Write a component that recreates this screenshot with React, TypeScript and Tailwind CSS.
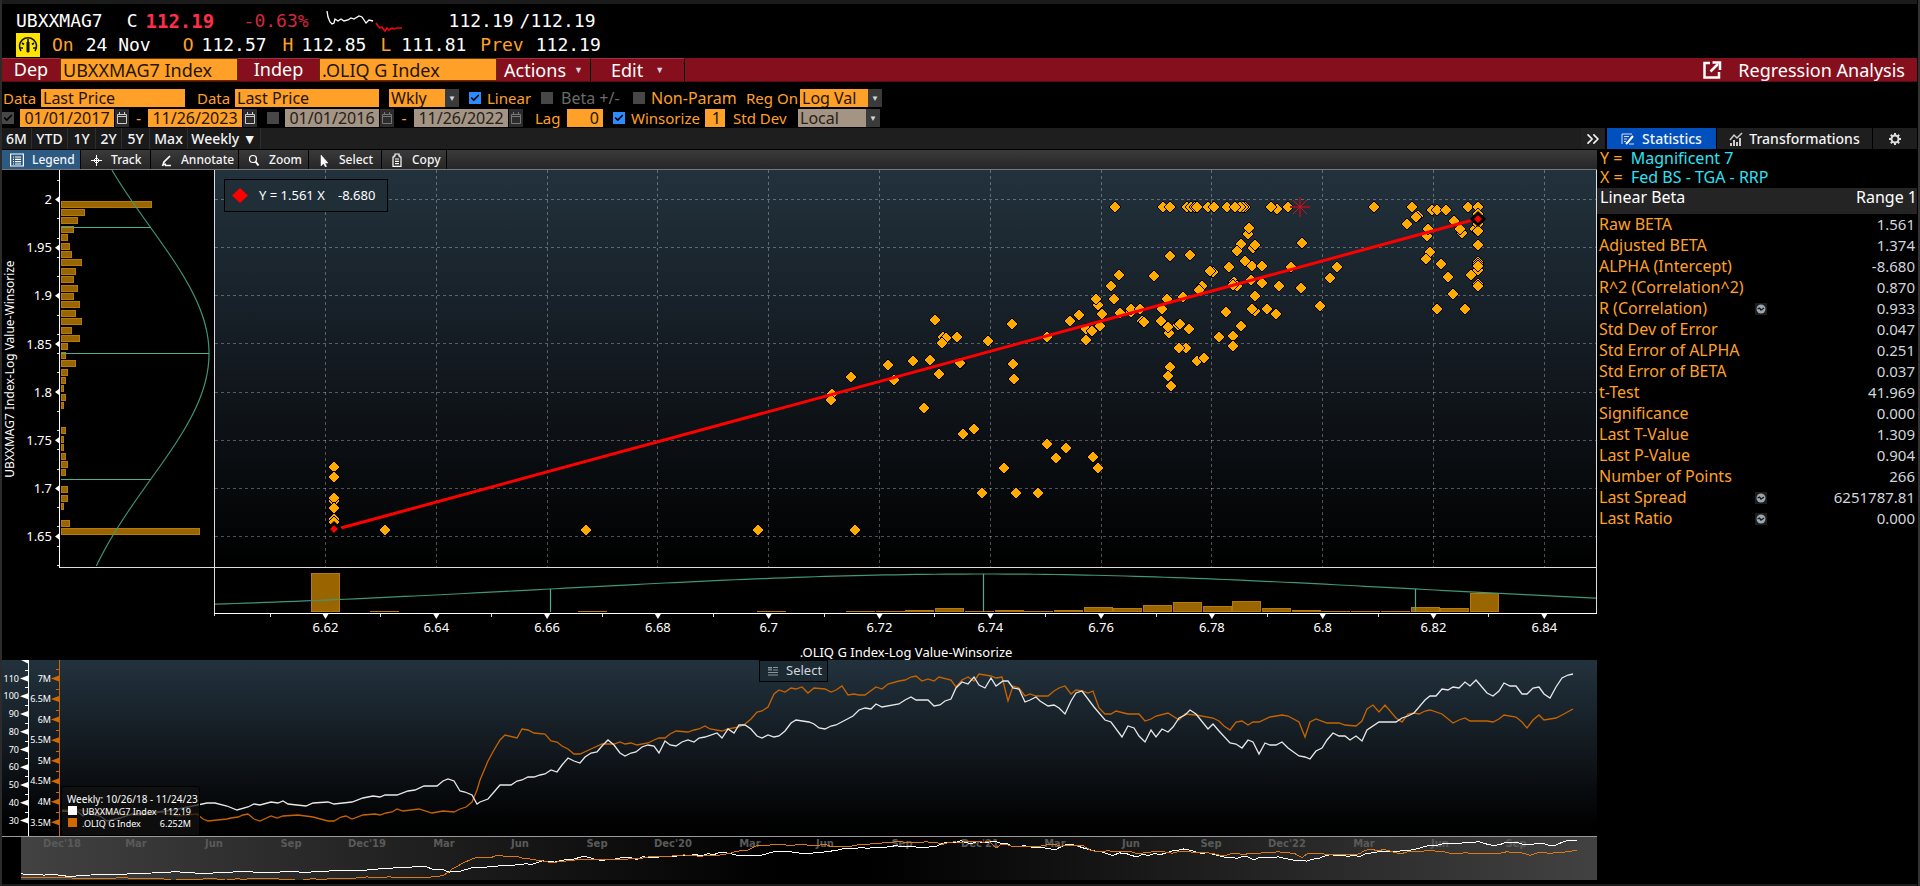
import React from 'react';
import { Check, ChevronsRight } from 'lucide-react';

type Point = [number, number];

const DEP: Point[] = [
    [61, 811], [78, 812], [83, 816], [88, 813], [100, 816], [107, 821], [120, 818], [132, 814], [150, 813], [173, 810], [188, 807],
    [207, 803], [215, 803], [227, 806], [237, 810], [248, 807], [254, 804], [260, 805], [271, 802], [278, 803], [283, 801], [288, 804],
    [306, 806], [313, 803], [328, 802], [334, 804], [352, 802], [363, 798], [373, 796], [380, 797], [385, 795], [397, 795], [408, 791],
    [415, 790], [424, 786], [437, 786], [443, 781], [448, 779], [454, 781], [460, 791], [465, 792], [472, 795], [477, 804], [480, 802],
    [488, 799], [494, 792], [500, 785], [511, 785], [517, 781], [522, 780], [528, 777], [534, 777], [540, 775], [545, 774], [551, 770],
    [557, 772], [562, 765], [568, 758], [574, 761], [580, 763], [585, 757], [591, 753], [597, 752], [602, 746], [608, 740], [614, 745],
    [620, 753], [625, 756], [631, 753], [636, 752], [642, 747], [648, 745], [654, 746], [659, 753], [665, 741], [670, 745], [676, 746],
    [682, 742], [688, 740], [694, 742], [699, 738], [705, 737], [717, 733], [722, 738], [728, 729], [734, 733], [739, 725], [745, 725],
    [751, 729], [757, 736], [762, 738], [768, 735], [774, 737], [779, 736], [785, 731], [791, 723], [796, 720], [809, 722], [814, 724],
    [819, 728], [825, 729], [831, 726], [836, 725], [853, 716], [859, 710], [865, 708], [871, 709], [876, 704], [882, 707], [899, 704],
    [905, 700], [911, 697], [916, 700], [928, 700], [934, 706], [940, 705], [945, 701], [951, 699], [956, 688], [962, 682], [968, 684],
    [974, 677], [979, 685], [985, 688], [991, 678], [996, 686], [1003, 681], [1008, 681], [1013, 688], [1019, 689], [1025, 702],
    [1030, 700], [1036, 697], [1040, 701], [1048, 706], [1054, 705], [1059, 708], [1065, 714], [1071, 701], [1076, 693], [1082, 691],
    [1094, 707], [1105, 720], [1111, 722], [1122, 737], [1128, 726], [1134, 728], [1139, 736], [1145, 742], [1151, 730], [1156, 737],
    [1162, 729], [1168, 732], [1173, 727], [1179, 718], [1185, 715], [1190, 710], [1196, 714], [1208, 729], [1213, 724], [1219, 731],
    [1230, 743], [1236, 744], [1242, 748], [1248, 740], [1253, 742], [1259, 754], [1265, 743], [1270, 745], [1276, 745], [1282, 742],
    [1288, 748], [1299, 756], [1305, 757], [1310, 759], [1316, 751], [1322, 748], [1327, 740], [1333, 733], [1339, 736], [1345, 736],
    [1350, 740], [1356, 736], [1362, 741], [1367, 730], [1379, 722], [1396, 722], [1402, 718], [1408, 716], [1414, 713], [1425, 700],
    [1430, 696], [1436, 696], [1442, 689], [1448, 690], [1453, 687], [1459, 688], [1465, 682], [1470, 686], [1476, 680], [1487, 693],
    [1493, 696], [1499, 691], [1504, 683], [1510, 686], [1516, 686], [1522, 694], [1527, 694], [1533, 688], [1539, 687], [1544, 694],
    [1550, 698], [1556, 687], [1562, 678], [1568, 675], [1573, 674],
];

const INDEP: Point[] = [
    [61, 810], [78, 810], [100, 813], [110, 813], [127, 815], [143, 815], [160, 812], [177, 816], [197, 814], [203, 819], [208, 821],
    [227, 819], [231, 818], [238, 817], [243, 815], [248, 814], [254, 819], [260, 821], [271, 816], [277, 818], [283, 816], [298, 815],
    [313, 817], [328, 821], [334, 821], [341, 817], [346, 816], [352, 819], [363, 815], [375, 814], [380, 815], [386, 813], [392, 812],
    [397, 809], [403, 811], [419, 809], [432, 813], [443, 811], [454, 812], [460, 809], [466, 807], [472, 802], [477, 790], [480, 780],
    [488, 761], [494, 750], [500, 740], [505, 735], [517, 738], [522, 729], [528, 730], [534, 733], [545, 734], [551, 741], [557, 742],
    [562, 746], [568, 749], [574, 754], [580, 754], [591, 749], [602, 744], [614, 744], [620, 742], [625, 744], [631, 743], [637, 745],
    [648, 743], [654, 740], [659, 738], [665, 738], [670, 734], [676, 731], [688, 732], [694, 730], [699, 729], [705, 726], [710, 729],
    [722, 731], [728, 729], [739, 727], [745, 724], [751, 719], [757, 712], [762, 711], [768, 707], [774, 694], [779, 690], [785, 692],
    [791, 688], [796, 689], [802, 687], [808, 693], [814, 688], [825, 689], [831, 692], [836, 690], [842, 686], [848, 695], [854, 694],
    [859, 695], [865, 695], [876, 687], [882, 689], [888, 684], [899, 681], [905, 680], [911, 677], [916, 676], [922, 681], [928, 679],
    [934, 681], [939, 677], [951, 680], [956, 687], [962, 680], [968, 677], [974, 681], [979, 674], [991, 676], [996, 678], [1002, 677],
    [1008, 701], [1013, 686], [1019, 688], [1025, 696], [1030, 694], [1036, 696], [1048, 696], [1054, 691], [1059, 688], [1065, 686],
    [1071, 694], [1076, 690], [1082, 691], [1088, 693], [1093, 691], [1099, 708], [1105, 714], [1111, 714], [1116, 711], [1128, 714],
    [1139, 714], [1145, 721], [1151, 719], [1156, 716], [1168, 713], [1179, 720], [1185, 714], [1196, 715], [1213, 718], [1219, 721],
    [1224, 726], [1230, 730], [1236, 722], [1242, 721], [1248, 725], [1253, 722], [1259, 722], [1270, 717], [1282, 715], [1288, 716],
    [1299, 722], [1305, 737], [1310, 722], [1316, 719], [1327, 723], [1339, 723], [1345, 725], [1356, 726], [1362, 721], [1367, 709],
    [1373, 705], [1379, 712], [1385, 705], [1396, 718], [1402, 722], [1408, 714], [1414, 713], [1419, 714], [1425, 711], [1430, 710],
    [1442, 714], [1453, 723], [1459, 720], [1465, 718], [1470, 721], [1487, 721], [1493, 722], [1499, 719], [1504, 715], [1516, 717],
    [1522, 722], [1527, 728], [1533, 720], [1539, 715], [1544, 720], [1556, 718], [1562, 715], [1573, 709],
];

const SCATTER: Point[] = [
    [334, 467], [334, 477], [334, 501], [334, 498], [334, 508], [334, 519], [334, 522], [385, 530], [586, 530], [758, 530], [855, 530],
    [832, 394], [831, 400], [851, 377], [888, 365], [894, 380], [913, 361], [930, 360], [924, 408], [935, 320], [943, 337], [946, 338],
    [942, 343], [957, 337], [939, 374], [961, 363], [960, 363], [963, 434], [974, 429], [988, 341], [982, 493], [1004, 468], [1012, 324],
    [1013, 364], [1014, 379], [1016, 493], [1038, 493], [1047, 337], [1047, 444], [1056, 458], [1066, 448], [1070, 321], [1079, 315],
    [1086, 329], [1086, 340], [1092, 331], [1093, 457], [1098, 468], [1100, 326], [1102, 314], [1098, 305], [1096, 299], [1114, 299],
    [1111, 286], [1119, 275], [1115, 207], [1120, 313], [1131, 312], [1131, 309], [1140, 309], [1142, 321], [1144, 322], [1154, 276],
    [1161, 321], [1162, 309], [1167, 299], [1169, 333], [1168, 327], [1170, 256], [1178, 325], [1180, 324], [1183, 297], [1189, 329],
    [1190, 255], [1186, 348], [1179, 348], [1170, 367], [1168, 376], [1171, 386], [1197, 361], [1204, 358], [1202, 286], [1199, 290],
    [1213, 272], [1210, 271], [1163, 207], [1170, 207], [1187, 207], [1191, 207], [1195, 207], [1197, 207], [1208, 207], [1214, 207],
    [1227, 207], [1245, 207], [1243, 207], [1240, 207], [1235, 207], [1277, 209], [1271, 207], [1288, 207], [1374, 207],
    [1412, 207], [1418, 216], [1416, 217], [1407, 224], [1432, 210], [1437, 210], [1446, 210], [1468, 207], [1478, 207], [1454, 221],
    [1462, 233], [1460, 229], [1427, 236], [1428, 229], [1430, 252], [1426, 259], [1441, 264], [1448, 277], [1453, 294], [1437, 309],
    [1465, 309], [1471, 275], [1478, 245], [1475, 229], [1478, 214], [1478, 218], [1478, 224], [1478, 231], [1478, 270], [1478, 262],
    [1478, 264], [1478, 266], [1478, 284], [1478, 286], [1248, 234], [1249, 228], [1241, 244], [1237, 251], [1253, 248], [1255, 245],
    [1245, 261], [1252, 266], [1262, 266], [1229, 267], [1251, 280], [1234, 282], [1237, 286], [1233, 285], [1262, 283], [1255, 296],
    [1279, 286], [1301, 288], [1302, 243], [1291, 267], [1337, 267], [1330, 278], [1320, 306], [1226, 312], [1255, 311], [1252, 309],
    [1267, 309], [1276, 314], [1241, 326], [1219, 337], [1233, 336], [1233, 346],
];

// bucket index -> bar length
const Y_BARS: Point[] = [
    [0, 91], [1, 24], [2, 17], [3, 13], [4, 7], [5, 9], [6, 11], [7, 21], [8, 15], [9, 13], [10, 17], [11, 13], [12, 19], [13, 15],
    [14, 21], [15, 11], [16, 19], [17, 7], [18, 5], [19, 15], [20, 7], [21, 5], [22, 3], [23, 5], [24, 3], [27, 5], [28, 3], [29, 3],
    [30, 5], [31, 7], [32, 5], [34, 7], [35, 7], [36, 3], [38, 9], [39, 139],
];

const X_BARS: Point[] = [
    [0, 39], [2, 1], [9, 1], [15, 1], [18, 1], [19, 1], [20, 2], [21, 4], [22, 1], [23, 2], [24, 1], [25, 2], [26, 5], [27, 4], [28, 7],
    [29, 10], [30, 6], [31, 11], [32, 4], [33, 2], [34, 1], [35, 1], [36, 1], [37, 5], [38, 4], [39, 19],
];

const STATS = [
    { label: 'Raw BETA', value: '1.561' },
    { label: 'Adjusted BETA', value: '1.374' },
    { label: 'ALPHA (Intercept)', value: '-8.680' },
    { label: 'R^2 (Correlation^2)', value: '0.870' },
    { label: 'R (Correlation)', value: '0.933', chart: true },
    { label: 'Std Dev of Error', value: '0.047' },
    { label: 'Std Error of ALPHA', value: '0.251' },
    { label: 'Std Error of BETA', value: '0.037' },
    { label: 't-Test', value: '41.969' },
    { label: 'Significance', value: '0.000' },
    { label: 'Last T-Value', value: '1.309' },
    { label: 'Last P-Value', value: '0.904' },
    { label: 'Number of Points', value: '266' },
    { label: 'Last Spread', value: '6251787.81', chart: true },
    { label: 'Last Ratio', value: '0.000', chart: true },
];

const MONTHS: [number, string][] = [
    [62, "Dec'18"], [136, 'Mar'], [214, 'Jun'], [291, 'Sep'], [367, "Dec'19"], [444, 'Mar'], [520, 'Jun'], [597, 'Sep'],
    [673, "Dec'20"], [750, 'Mar'], [825, 'Jun'], [902, 'Sep'], [980, "Dec'21"], [1055, 'Mar'], [1131, 'Jun'], [1211, 'Sep'],
    [1287, "Dec'22"], [1364, 'Mar'], [1440, 'Jun'], [1516, 'Sep'],
];

const range = (n: number) => Array.from({ length: n }, (_, i) => i);
const toPoints = (pts: Point[]) => pts.map((p) => p.join(',')).join(' ');
const bell = (d: number, sigma: number) => Math.exp(-(d * d) / (2 * sigma * sigma));

const yScale = (v: number) => 199.5 + ((2 - v) / 0.05) * 48.15;
const xScale = (v: number) => 325.5 + ((v - 6.62) / 0.02) * 110.8;

const Y_CURVE: Point[] = range(100).map((i) => [60.5 + 148.5 * bell(170 + i * 4 - 353.5, 126), 170 + i * 4]);
const X_CURVE: Point[] = range(140).map((i) => [215 + i * 10, 612 - 38 * bell(215 + i * 10 - 983, 432)]);

const miniature = (pts: Point[], top: number, k: number): Point[] =>
    pts.map(([x, y]) => [Math.round(21 + (x - 61) * 1.0294), top + (y - 674) * k]);

const App: React.FC = () => (
    <div className="min-h-screen flex flex-col bg-black border-l-2 border-r-2 border-l-[#2b2b2b] border-r-[#333] pr-px text-white font-['Noto_Sans','Open_Sans',sans-serif] overflow-hidden">
        <div className="h-1 bg-[#1b1b1b]" />
        <QuoteHeader />
        <MenuBar />
        <Controls />
        <RangeBar />
        <div className="flex items-start">
            <main className="flex-1 min-w-0">
                <ChartToolbar />
                <ScatterChart />
                <TimeSeries />
            </main>
            <StatsPanel />
        </div>
        <div className="h-0.5 mt-auto bg-[#1b1b1b]" />
    </div>
);

const QuoteHeader = () => (
    <header className="pt-[5px] pb-px font-['DejaVu_Sans_Mono',monospace] text-lg leading-6 whitespace-pre">
        <div className="flex items-center h-6 pl-3.5">
            <span>UBXXMAG7</span>
            <span className="ml-6">C</span>
            <span className="ml-2 w-[74px] font-bold text-[19px] text-[#ff2e4a]">112.19</span>
            <span className="ml-6 text-[#d5263f]">-0.63%</span>
            <svg className="ml-4 shrink-0" width="80" height="24" viewBox="327 9 80 24" fill="none" strokeWidth="1.3">
                <polyline stroke="#fff" points="329,11 330,17 332,22 334,24 336,23 337,19 340,21 343,19 346,21 350,20 353,18 356,19 361,16 364,17 366,20 368,23 371,20 375,21" />
                <polyline stroke="#f00014" strokeWidth="1.6" points="378,23 380,26 382,28 384,27 387,31 389,28 391,30 394,28 396,29 399,28 404,28" />
            </svg>
            <span className="ml-11">112.19</span>
            <span className="ml-1.5">/112.19</span>
        </div>
        <div className="flex items-center h-6 pl-3.5">
            <span className="size-6 bg-[#ffe600] flex items-center justify-center">
                <svg width="22" height="18" viewBox="0 0 22 18" fill="none" stroke="#111" strokeWidth="1.6">
                    <path d="M4 15A8.5 8.5 0 1 1 18 15" />
                    <path d="M11 3v4M5 7l2 1.5M17 7l-2 1.5M3 12h3M16 12h3" />
                    <path d="M10 16V6h2v10z" fill="#111" strokeWidth="1" />
                </svg>
            </span>
            <span className="ml-3 text-[#ffa028]">On</span>
            <span className="ml-3">24 Nov</span>
            <span className="ml-8 text-[#ffa028]">O</span>
            <span className="ml-2">112.57</span>
            <span className="ml-4 text-[#ffa028]">H</span>
            <span className="ml-2">112.85</span>
            <span className="ml-3.5 text-[#ffa028]">L</span>
            <span className="ml-2.5">111.81</span>
            <span className="ml-3.5 text-[#ffa028]">Prev</span>
            <span className="ml-3">112.19</span>
        </div>
    </header>
);

const MenuBar = () => (
    <nav className="flex h-6 bg-[#860f1d] border-b border-[#5c0812] text-lg leading-6">
        <label htmlFor="dep" className="w-[58px] text-center border-t border-[#a33240] leading-5">Dep</label>
        <input id="dep" defaultValue="UBXXMAG7 Index" className="w-[178px] px-0.5 bg-[#ffa028] border border-[#5c3300] text-[#241500] outline-none" />
        <label htmlFor="indep" className="w-[81px] text-center border-t border-[#a33240] leading-5">Indep</label>
        <input id="indep" defaultValue=".OLIQ G Index" className="w-[178px] px-0.5 bg-[#ffa028] border border-[#5c3300] text-[#241500] outline-none" />
        <button className="w-[94px] flex items-center justify-center gap-2 border-t border-t-[#a33240] border-r border-r-black leading-5">
            Actions<span className="text-[9px] text-gray-300">▼</span>
        </button>
        <button className="w-[94px] flex items-center justify-center gap-3 border-t border-t-[#a33240] border-r border-r-black leading-5">
            Edit<span className="text-[9px] text-gray-300">▼</span>
        </button>
        <div className="ml-auto flex items-center gap-4 pr-3">
            <svg width="20" height="20" viewBox="0 0 20 20" fill="none" stroke="#fff" strokeWidth="2.5">
                <path d="M8 3H2.500v14.500H17V12" />
                <path d="M8.500 11.500L16 4" />
                <path d="M10.500 2.500H18V10" />
            </svg>
            <h1 className="text-lg leading-6">Regression Analysis</h1>
        </div>
    </nav>
);

const Tick = ({ id, on, dim }: { id: string; on?: boolean; dim?: boolean }) => (
    <span className="relative size-3 shrink-0">
        <input
            id={id}
            type="checkbox"
            defaultChecked={on}
            aria-label={id}
            className={`block appearance-none size-3 ${on && !dim ? 'bg-[#2b8cff]' : 'bg-[#474747]'}`}
        />
        {on && <Check size={10} strokeWidth={4} className="absolute top-px left-px text-black pointer-events-none" />}
    </span>
);

const Dropdown = ({ id, value, dim, width }: { id: string; value: string; dim?: boolean; width: string }) => (
    <span className={`relative flex h-[18px] ${width}`}>
        <select
            id={id}
            aria-label={id}
            className={`appearance-none flex-1 min-w-0 h-[18px] px-0.5 leading-[18px] outline-none ${dim ? 'bg-[#a39483] text-[#262019]' : 'bg-[#ffa028] text-[#241500]'}`}
        >
            <option>{value}</option>
        </select>
        <span className="w-3.5 bg-[#3a3a3a] flex items-center justify-center text-[8px] text-gray-300 pointer-events-none">▼</span>
    </span>
);

const DateBox = ({ value, label, dim }: { value: string; label: string; dim?: boolean }) => (
    <span className="flex h-[18px] gap-px">
        <input
            aria-label={label}
            defaultValue={value}
            className={`w-[94px] h-[18px] text-center outline-none ${dim ? 'bg-[#a39483] text-[#262019]' : 'bg-[#ffa028] text-[#241500]'}`}
        />
        <button aria-label={`${label} calendar`} className="w-3.5 bg-[#2c2c2c] flex items-center justify-center">
            <svg width="10" height="12" viewBox="0 0 10 12" fill="none" stroke={dim ? '#777' : '#ccc'}>
                <path d="M.5 2.5h9v9h-9zM.5 4.5h9M2.5 0v3M7.5 0v3" />
            </svg>
        </button>
    </span>
);

const Controls = () => (
    <section className="pt-[7px] pb-px flex flex-col gap-0.5 text-[16px] leading-[18px] text-[#ffa028] whitespace-nowrap">
        <div className="flex items-center h-[18px]">
            <label htmlFor="dep-data" className="w-[39px] pl-px text-[15px]">Data</label>
            <input id="dep-data" defaultValue="Last Price" className="w-36 h-[18px] px-0.5 bg-[#ffa028] text-[#241500] outline-none" />
            <label htmlFor="indep-data" className="w-[50px] pl-3 text-[15px]">Data</label>
            <input id="indep-data" defaultValue="Last Price" className="w-36 h-[18px] px-0.5 bg-[#ffa028] text-[#241500] outline-none" />
            <span className="w-2.5" />
            <Dropdown id="Period" value="Wkly" width="w-[70px]" />
            <span className="w-2.5" />
            <Tick id="Linear" on />
            <label htmlFor="Linear" className="w-[60px] pl-1.5 text-[15px]">Linear</label>
            <Tick id="Beta" />
            <label htmlFor="Beta" className="w-20 pl-2 text-[#6b6b6b]">Beta +/-</label>
            <Tick id="Non-Param" />
            <label htmlFor="Non-Param" className="w-[100px] pl-1.5">Non-Param</label>
            <label htmlFor="Regression" className="w-[55px] pl-px text-[15px]">Reg On</label>
            <Dropdown id="Regression" value="Log Val" width="w-[82px]" />
        </div>
        <div className="flex items-center h-[18px]">
            <Tick id="Range 1" on dim />
            <span className="w-1.5" />
            <DateBox label="Range 1 start" value="01/01/2017" />
            <span className="w-[19px] text-center">-</span>
            <DateBox label="Range 1 end" value="11/26/2023" />
            <span className="w-2.5" />
            <Tick id="Range 2" />
            <span className="w-1.5" />
            <DateBox label="Range 2 start" value="01/01/2016" dim />
            <span className="w-5 text-center">-</span>
            <DateBox label="Range 2 end" value="11/26/2022" dim />
            <label htmlFor="lag" className="w-11 pl-3 text-[15px]">Lag</label>
            <input id="lag" defaultValue="0" className="w-9 h-[18px] px-1 text-right bg-[#ffa028] text-[#241500] outline-none" />
            <span className="w-2.5" />
            <Tick id="Winsorize" on />
            <label htmlFor="Winsorize" className="w-20 pl-1.5 text-[15px]">Winsorize</label>
            <input aria-label="Winsorize deviations" defaultValue="1" className="w-5 h-[18px] px-1 text-right bg-[#ffa028] text-[#241500] outline-none" />
            <label htmlFor="Currency" className="w-[73px] pl-2 text-[15px]">Std Dev</label>
            <Dropdown id="Currency" value="Local" width="w-[82px]" dim />
        </div>
    </section>
);

const RangeButton = ({ children, width }: { children: React.ReactNode; width: string }) => (
    <button className={`${width} h-full text-center border-r border-[#2e2e2e] bg-[#1a1a1a]`}>{children}</button>
);

const RangeBar = () => (
    <div className="flex h-[21px] bg-[#1e1e1e] text-sm leading-5 text-gray-100 font-medium">
        <RangeButton width="w-[30px]">6M</RangeButton>
        <RangeButton width="w-9">YTD</RangeButton>
        <RangeButton width="w-7">1Y</RangeButton>
        <RangeButton width="w-[26px]">2Y</RangeButton>
        <RangeButton width="w-7">5Y</RangeButton>
        <RangeButton width="w-[38px]">Max</RangeButton>
        <RangeButton width="w-[73px]">Weekly ▼</RangeButton>
        <div className="ml-auto flex bg-black gap-px">
            <button aria-label="Collapse" className="w-6 bg-[#222] flex items-center justify-center mr-px">
                <ChevronsRight size={20} strokeWidth={2} />
            </button>
            <button className="w-[109px] bg-[#0050bd] flex items-center justify-center gap-2">
                <svg width="13" height="12" viewBox="0 0 13 12" fill="none" stroke="#ddd">
                    <path d="M1 1h10M1 1v10M3 3.500h5M3 6h3M3 8.500h2" />
                    <path d="M12 3L7 9l-2 2" stroke="#fff" strokeWidth="2" />
                    <path d="M8 11h5" />
                </svg>
                Statistics
            </button>
            <button className="w-[155px] bg-[#1e1e1e] flex items-center justify-center gap-1.5">
                <svg width="14" height="14" viewBox="0 0 14 14" fill="none" stroke="#ccc" strokeWidth="1.5">
                    <path d="M1 8l4-5 3 3 5-5" />
                    <path d="M2 14v-3M5 14V8M8 14v-4M11 14V6" strokeWidth="2" />
                </svg>
                Transformations
            </button>
            <button aria-label="Settings" className="w-11 bg-[#1e1e1e] flex items-center justify-center">
                <svg width="14" height="14" viewBox="0 0 14 14" fill="none" stroke="#ddd">
                    <circle cx="7" cy="7" r="3.500" strokeWidth="2" />
                    <path d="M7 1v2.500M7 10.500V13M1 7h2.500M10.500 7H13M2.800 2.800l1.700 1.700M9.500 9.500l1.700 1.700M2.800 11.200l1.700-1.700M9.500 4.500l1.700-1.700" strokeWidth="2" />
                </svg>
            </button>
        </div>
    </div>
);

const ToolButton = ({ icon, label, width, active }: { icon: React.ReactNode; label: string; width: string; active?: boolean }) => (
    <button className={`${width} h-full flex items-center gap-2 pl-2 border-r border-black ${active ? 'bg-[#2c5a82]' : ''}`}>
        <svg width="14" height="14" viewBox="0 0 14 14" fill="none" stroke="#fff" strokeWidth="1.2">{icon}</svg>
        {label}
    </button>
);

const ChartToolbar = () => (
    <div className="mt-px flex h-5 bg-gradient-to-b from-[#3a3a3a] to-[#262626] border-b border-[#777] text-xs font-medium text-gray-100">
        <ToolButton width="w-[79px]" label="Legend" active icon={<path d="M.6 1h12.800v12H.6zM3 4h1M5 4h6M3 6.300h1M5 6.300h6M3 8.600h1M5 8.600h6M3 11h1M5 11h6" />} />
        <ToolButton width="w-[70px]" label="Track" icon={<><path d="M7.500 2v11M2 7.500h11" strokeWidth="1" /><path d="M7.500 4.500l3 3-3 3-3-3z" strokeWidth="1" /></>} />
        <ToolButton width="w-[88px]" label="Annotate" icon={<path d="M11 3L5 9l-1 3 3-1M6 12.500h6" strokeWidth="1.7" />} />
        <ToolButton width="w-[70px]" label="Zoom" icon={<><circle cx="6" cy="6" r="3.500" /><path d="M8.500 8.500l3 4" strokeWidth="2" /></>} />
        <ToolButton width="w-[73px]" label="Select" icon={<path d="M4 2v11l2.500-2.500L8.500 14l1-.5L8 10h3z" fill="#fff" strokeWidth=".5" />} />
        <ToolButton width="w-[65px]" label="Copy" icon={<path d="M3 4h1V3h1V1h4v2h1v1h1v9.400H3zM5 6h4M5 8.300h4M5 10.600h4" />} />
    </div>
);

const ScatterChart = () => (
    <svg viewBox="2 170 1595 490" className="block w-full h-auto" fill="none">
        <defs>
            <linearGradient id="panel" x1="0" y1="0" x2="0" y2="1">
                <stop offset="0" stopColor="#22323d" />
                <stop offset=".45" stopColor="#141b22" />
                <stop offset="1" stopColor="#000" />
            </linearGradient>
        </defs>
        <rect x="215" y="170" width="1382" height="397" fill="url(#panel)" />

        <g stroke="#fff" strokeOpacity=".3" strokeDasharray="3 3" shapeRendering="crispEdges">
            {range(8).map((i) => <path key={i} d={`M215 ${yScale(2 - i * 0.05)}H1596`} />)}
            {range(12).map((i) => <path key={i} d={`M${xScale(6.62 + i * 0.02)} 170V567`} />)}
        </g>

        <g fill="#996500" stroke="#b87a08" shapeRendering="crispEdges">
            {Y_BARS.map(([i, w]) => <rect key={i} x="61" y={Math.round(200.5 + i * 8.4)} width={w - 1} height="6" />)}
            {X_BARS.map(([i, h]) => <rect key={i} x={Math.round(311 + i * 29.72)} y={612 - h} width="28" height={h - 0.5} />)}
        </g>

        <g stroke="#3f9678" strokeWidth="1.2">
            <polyline points={toPoints(Y_CURVE)} />
            <polyline points={toPoints(X_CURVE)} />
            <g stroke="#4fae8e">
                <path d="M61 227.500H151M61 353.500H209M61 479.500H151" />
                <path d="M550.500 589V612M983.500 574V612M1415.500 589V612" />
            </g>
        </g>

        <rect x="2" y="568" width="212" height="92" fill="#000" />
        <g stroke="#ddd" shapeRendering="crispEdges">
            <path d="M214.500 170V616M60 567.500H1597M1596.500 170V613" />
            <path d="M59.500 170V568M214 613.500H1597" stroke="#fff" />
            {range(21).map((i) => <path key={i} d={`M57 ${yScale(2.02 - i * 0.02)}h2`} />)}
            {range(12).map((i) => <path key={i} d={`M${xScale(6.61 + i * 0.02)} 614v3`} />)}
        </g>
        <g fill="#fff" className="text-[13px]">
            {range(8).map((i) => {
                const y = yScale(2 - i * 0.05);
                return (
                    <React.Fragment key={i}>
                        <path d={`M59 ${y - 3}v6l-4-3z`} />
                        <text x="52" y={y} dy=".36em" textAnchor="end">{Number((2 - i * 0.05).toFixed(2))}</text>
                    </React.Fragment>
                );
            })}
            {range(12).map((i) => {
                const x = xScale(6.62 + i * 0.02);
                return (
                    <React.Fragment key={i}>
                        <path d={`M${x - 3} 614h6l-3 5z`} />
                        <text x={x} y="627" dy=".36em" textAnchor="middle">{Number((6.62 + i * 0.02).toFixed(2))}</text>
                    </React.Fragment>
                );
            })}
            <text x="906" y="652" dy=".36em" textAnchor="middle">.OLIQ G Index-Log Value-Winsorize</text>
            <text transform="translate(10 369) rotate(-90)" dy=".3em" textAnchor="middle" className="text-[12px]">UBXXMAG7 Index-Log Value-Winsorize</text>
        </g>

        <g fill="#ffaa00" stroke="#000">
            {SCATTER.map(([x, y], i) => <path key={i} d={`M${x} ${y - 6}l6 6-6 6-6-6z`} />)}
        </g>
        <path d="M341 528L1471 220.500" stroke="#f00" strokeWidth="3" />
        <path d="M1300 197v20M1290 207h20" stroke="#8e1420" strokeWidth="2" />
        <path d="M1293 200l14 14M1307 200l-14 14" stroke="#c8141e" />
        <path d="M334 523l6 6-6 6-6-6zM1478 213l6 6-6 6-6-6z" fill="#f00" stroke="#000" strokeWidth="3" />

        <rect x="224.500" y="179.500" width="163" height="32" fill="#202e38" stroke="#000" />
        <path d="M240 188l8 7.500-8 7.500-8-7.500z" fill="#f00" />
        <text x="259" y="195" dy=".36em" fill="#fff" className="text-[13px]">
            Y = 1.561 X<tspan x="338">-8.680</tspan>
        </text>
    </svg>
);

const TimeSeries = () => (
    <div className="relative">
        <svg viewBox="2 660 1595 221" className="block w-full h-auto" fill="none">
            <defs>
                <linearGradient id="series" x1="0" y1="0" x2="0" y2="1">
                    <stop offset="0" stopColor="#22323d" />
                    <stop offset=".48" stopColor="#131a20" />
                    <stop offset=".95" stopColor="#000" />
                </linearGradient>
                <linearGradient id="strip">
                    <stop offset="0" stopColor="#424242" />
                    <stop offset=".48" stopColor="#000" />
                    <stop offset=".54" stopColor="#000" />
                    <stop offset="1" stopColor="#424242" />
                </linearGradient>
            </defs>
            <rect x="2" y="660" width="1595" height="176" fill="url(#series)" />

            <polyline points={toPoints(INDEP)} stroke="#c86400" strokeWidth="1.3" />
            <polyline points={toPoints(DEP)} stroke="#e8e8e8" strokeWidth="1.3" />

            <g className="text-[9px]" fill="#fff">
                <path d="M28.500 660V836" stroke="#fff" />
                <path d="M21 660h8v4z" />
                {range(9).map((i) => {
                    const y = 678.5 + i * 17.75;
                    return (
                        <React.Fragment key={i}>
                            <path d={`M28 ${y - 3}v6l-8-3z`} />
                            <path d={`M25 ${Math.round(y - 9) + 0.5}h3`} stroke="#fff" />
                            <text x="19" y={y} dy=".36em" textAnchor="end">{110 - i * 10}</text>
                        </React.Fragment>
                    );
                })}
                <path d="M59.500 660V836" stroke="#c86400" />
                {range(8).map((i) => {
                    const y = 678.5 + i * 20.55;
                    return (
                        <React.Fragment key={i}>
                            <path d={`M59 ${y - 3}v6l-8-3z`} fill="#d26900" />
                            <path d={`M56 ${Math.round(y - 10) + 0.5}h3`} stroke="#d26900" />
                            <text x="51" y={y} dy=".36em" textAnchor="end">{`${7 - i * 0.5}M`}</text>
                        </React.Fragment>
                    );
                })}
            </g>

            <g className="text-[9px]" fill="#fff">
                <rect x="61.500" y="786.500" width="138" height="49" rx="2" fill="#111" fillOpacity=".75" stroke="#000" />
                <text x="67" y="799" dy=".36em" className="text-[10px]">Weekly: 10/26/18 - 11/24/23</text>
                <rect x="68" y="806" width="9" height="9" />
                <text x="82" y="812" dy=".36em">UBXXMAG7 Index</text>
                <text x="191" y="812" dy=".36em" textAnchor="end">112.19</text>
                <rect x="68" y="818" width="9" height="9" fill="#d26900" />
                <text x="82" y="824" dy=".36em">.OLIQ G Index</text>
                <text x="191" y="824" dy=".36em" textAnchor="end">6.252M</text>
            </g>

            <rect x="2" y="836" width="1595" height="1" fill="#999" />
            <rect x="21" y="837" width="1576" height="43" fill="url(#strip)" />
            <g fill="#5a5a5a" className="text-[10px] font-bold font-['DejaVu_Sans',sans-serif]">
                {MONTHS.map(([x, m]) => <text key={x} x={x} y="843" dy=".36em" textAnchor="middle">{m}</text>)}
            </g>
            <g shapeRendering="crispEdges">
                <polyline points={toPoints(miniature(DEP, 840, 0.248))} stroke="#fff" />
                <polyline points={toPoints(miniature(INDEP, 841, 0.266))} stroke="#d97a16" />
            </g>
            <rect x="2" y="880" width="1595" height="1" fill="#000" />
        </svg>
        <button className="absolute top-0 left-[757px] w-[69px] h-[22px] flex items-center gap-2 pl-2 bg-[#1c2a34] border border-black text-[13px] text-gray-300">
            <svg width="10" height="10" viewBox="0 0 10 10" stroke="#8b959c">
                <path d="M0 1.500h4M0 3h4M5 1.500h5M5 4h5M0 4h4M0 6.500h10M0 9h10" />
            </svg>
            Select
        </button>
    </div>
);

const StatsPanel = () => (
    <aside className="w-80 text-[16px] leading-[19px] text-[#ffa028]">
        <p className="pl-[3px] whitespace-pre">Y =  <span className="text-[#2fe0f5]">Magnificent 7</span></p>
        <p className="pl-[3px] whitespace-pre">X =  <span className="text-[#2fe0f5]">Fed BS - TGA - RRP</span></p>
        <table className="w-full mt-px border-collapse">
            <thead>
                <tr className="h-[26px] bg-[#242424] text-white align-top">
                    <th className="pl-[3px] text-left font-normal">Linear Beta</th>
                    <th />
                    <th className="text-right font-normal">Range 1</th>
                </tr>
            </thead>
            <tbody>
                {STATS.map((s) => (
                    <tr key={s.label} className="h-[21px]">
                        <td className="w-[158px] pl-0.5 whitespace-nowrap">{s.label}</td>
                        <td>{s.chart && <ChartMark />}</td>
                        <td className="pr-0.5 text-[15px] text-right text-gray-300">{s.value}</td>
                    </tr>
                ))}
            </tbody>
        </table>
    </aside>
);

const ChartMark = () => (
    <svg width="12" height="12" viewBox="0 0 12 12" fill="none">
        <path d="M0 0h12v12H0z" fill="#1d1d1d" />
        <circle cx="6" cy="6" r="4.500" fill="#9aa5ad" />
        <path d="M2.500 6l2-1 1.500 2 3-2" stroke="#15191c" strokeWidth="1.3" />
    </svg>
);

export default App;
